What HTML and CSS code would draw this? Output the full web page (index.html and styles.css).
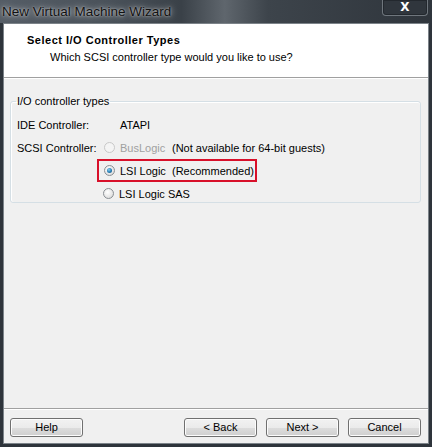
FILE: index.html
```html
<!DOCTYPE html>
<html>
<head>
<meta charset="utf-8">
<link rel="stylesheet" href="styles.css">
</head>
<body>
<div class="window">
  <div class="titlebar">
    <span class="title">New Virtual Machine Wizard</span>
    <div class="close">X</div>
  </div>
  <div class="client">
    <div class="header">
      <div class="h-title">Select I/O Controller Types</div>
      <div class="h-sub">Which SCSI controller type would you like to use?</div>
    </div>
    <div class="body">
      <fieldset class="group">
        <legend>I/O controller types</legend>
        <div class="row">
          <span class="lbl">IDE Controller:</span>
          <span class="val">ATAPI</span>
        </div>
        <div class="row r2">
          <span class="lbl lbl-scsi">SCSI Controller:</span>
          <span class="radio disabled"></span>
          <span class="opt disabled-text">BusLogic</span>
          <span class="note">(Not available for 64-bit guests)</span>
        </div>
        <div class="row r3">
          <div class="highlight">
            <span class="radio checked"></span>
            <span class="opt">LSI Logic</span>
            <span class="note">(Recommended)</span>
          </div>
        </div>
        <div class="row r4">
          <span class="radio"></span>
          <span class="opt">LSI Logic SAS</span>
        </div>
      </fieldset>
    </div>
    <div class="footer">
      <button class="btn">Help</button>
      <div class="spacer"></div>
      <button class="btn">&lt; Back</button>
      <button class="btn">Next &gt;</button>
      <button class="btn">Cancel</button>
    </div>
  </div>
</div>
</body>
</html>
```
FILE: styles.css
```css
html, body {
  margin: 0;
  padding: 0;
  width: 432px;
  height: 447px;
  overflow: hidden;
  font-family: "Liberation Sans", Arial, sans-serif;
}
.window {
  width: 432px;
  height: 447px;
  box-sizing: border-box;
  background: #2e343b;
  display: flex;
  flex-direction: column;
  padding: 0 3px 3px 3px;
}
.titlebar {
  height: 23px;
  flex: none;
  display: flex;
  align-items: flex-start;
  justify-content: space-between;
  background: linear-gradient(90deg, #555d66 0%, #4a525a 25%, #3a4148 42%, #5f666d 52%, #3d444b 62%, #2f353c 100%);
  margin: 0 -3px;
  padding: 0 4px 0 2px;
}
.title {
  font-family: "Liberation Sans", sans-serif;
  font-size: 13.5px;
  color: #111;
  text-shadow: 0 0 6px rgba(255,255,255,0.75), 0 0 2px rgba(255,255,255,0.6);
  line-height: 24px;
}
.close {
  width: 44px;
  height: 15px;
  border: 1px solid #6f767d;
  border-top: none;
  border-radius: 0 0 4px 4px;
  color: #fff;
  font-family: "DejaVu Sans", sans-serif;
  font-size: 12px;
  font-weight: bold;
  text-align: center;
  line-height: 14px;
  background: #30363d;
  box-shadow: inset 0 0 0 1px #23282e;
}
.client {
  flex: 1;
  background: #f0f0f0;
  display: flex;
  flex-direction: column;
  border: 1px solid #7c8389;
}
.header {
  background: #fff;
  height: 54px;
  border-bottom: 1px solid #a0a0a0;
  box-shadow: 0 1px 0 #fff;
  padding: 10px 0 0 23px;
  box-sizing: border-box;
  flex: none;
}
.h-title {
  font-weight: bold;
  font-size: 11px;
  letter-spacing: 0.5px;
  color: #000;
  line-height: 13px;
}
.h-sub {
  font-size: 11px;
  color: #000;
  padding-left: 23px;
  margin-top: 4px;
  line-height: 13px;
}
.body {
  flex: 1;
  padding: 17px 7px 0 6px;
}
.group {
  margin: 0;
  border: 1px solid #d5dfe5;
  border-radius: 3px;
  padding: 6px 6px 8px 6px;
  height: 108px;
  box-sizing: border-box;
  box-shadow: 0 1px 0 #fff inset, 1px 0 0 #fff inset;
}
legend {
  font-size: 11px;
  color: #000;
  padding: 0 1px;
  margin-left: -1px;
}
.row {
  display: flex;
  align-items: center;
  height: 23px;
  font-size: 11px;
  color: #000;
}
.lbl {
  width: 103px;
  flex: none;
}
.lbl-scsi {
  width: 87px;
}
.r3, .r4 {
  padding-left: 86px;
}
.r3 {
  margin-left: -6px;
}
.highlight {
  display: flex;
  align-items: center;
  border: 2px solid #d8102a;
  height: 19px;
  width: 151px;
  padding-left: 5px;
}
.radio {
  width: 11px;
  height: 11px;
  border-radius: 50%;
  border: 1px solid #8a8f94;
  background: radial-gradient(circle at 40% 35%, #fff 0%, #e6e6e6 60%, #d0d0d0 100%);
  box-sizing: border-box;
  margin-right: 5px;
  flex: none;
  position: relative;
}
.radio.disabled {
  border-color: #c8c8c8;
  background: #f4f4f4;
}
.radio.checked::after {
  content: "";
  position: absolute;
  left: 2px;
  top: 2px;
  width: 5px;
  height: 5px;
  border-radius: 50%;
  background: radial-gradient(circle at 40% 35%, #8fd0f0 0%, #2a82b8 50%, #174f7a 100%);
}
.opt {
  width: 52px;
  flex: none;
}
.r4 .opt { width: auto; }
.disabled-text {
  color: #a0a0a0;
}
.footer {
  flex: none;
  height: 34px;
  border-top: 1px solid #a0a0a0;
  box-shadow: inset 0 1px 0 #fff;
  display: flex;
  align-items: center;
  padding: 0 7px 0 6px;
  gap: 9px;
}
.spacer { flex: 1; }
.btn {
  width: 73px;
  height: 19px;
  font-family: "Liberation Sans", sans-serif;
  font-size: 11px;
  color: #000;
  border: 1px solid #707070;
  border-radius: 3px;
  background: linear-gradient(#f2f2f2 0%, #ebebeb 50%, #dddddd 51%, #cfcfcf 100%);
  box-shadow: inset 0 0 0 1px #fcfcfc;
  padding: 0;
  margin-top: 2px;
}
```
